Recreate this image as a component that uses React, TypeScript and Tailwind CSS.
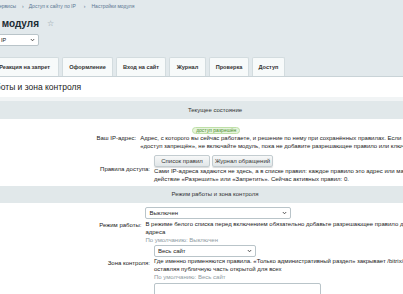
export default function App() {
  const tabs = [
    { name: "Оформление", w: "w-[51px]" },
    { name: "Вход на сайт", w: "w-[50px]" },
    { name: "Журнал", w: "w-[37px]" },
    { name: "Проверка", w: "w-[40px]" },
    { name: "Доступ", w: "w-[33px]" },
  ];

  return (
    <div className="w-[403px] h-[294px] overflow-hidden bg-[#e2e9ec] font-['Liberation_Sans',Arial,sans-serif] text-[#222]">
      {/* Breadcrumbs */}
      <div className="h-[13px] flex items-center text-[5px] text-[#5a7791] whitespace-nowrap">
        <div className="w-[16px] flex justify-end">
          <span>Рабочий стол › Сервисы</span>
        </div>
        <span className="ml-[6px]">›</span>
        <span className="ml-[5px]">Доступ к сайту по IP</span>
        <span className="ml-[8px]">›</span>
        <span className="ml-[6px]">Настройки модуля</span>
      </div>

      {/* Title */}
      <div className="mt-[3px] h-[15px] flex items-center whitespace-nowrap">
        <div className="w-[39px] flex justify-end">
          <span className="text-[10px] font-bold text-[#1b2a33]">Настройки модуля</span>
        </div>
        <span className="ml-[8px] text-[8px] text-[#8796a0] leading-none">☆</span>
      </div>

      {/* Site select */}
      <div className="mt-[3px] w-[41px] h-[12px] bg-white border border-[#b9c4c9] rounded-[2px] flex items-center -ml-[2px] pl-[2px] pr-[3px]">
        <span className="text-[5.5px] text-[#222]">IP</span>
        <svg className="ml-auto" width="5" height="4" viewBox="0 0 5 4">
          <path d="M0.8 1 L2.5 2.8 L4.2 1" fill="none" stroke="#333" strokeWidth="0.8" />
        </svg>
      </div>

      {/* Tabs */}
      <div className="mt-[11px] flex items-end gap-[3px] h-[20px] border-b border-[#c9d3d7]">
        <div className="w-[59px] h-[19px] flex justify-end items-center pr-[8px] bg-[#f7fafa] border border-b-0 border-[#d3dcdf] border-l-0 rounded-tr-[2px] whitespace-nowrap">
          <span className="text-[5.6px] font-semibold text-[#333]">Реакция на запрет</span>
        </div>
        {tabs.map((t) => (
          <div
            key={t.name}
            className={`${t.w} h-[19px] flex justify-center items-center bg-[#f7fafa] border border-b-0 border-[#d3dcdf] rounded-t-[2px] whitespace-nowrap`}
          >
            <span className="text-[5.6px] font-semibold text-[#333]">{t.name}</span>
          </div>
        ))}
      </div>

      {/* Content */}
      <div className="w-[430px] bg-white">
        <div className="h-[20px] flex items-center whitespace-nowrap">
          <div className="w-[81px] flex justify-end">
            <span className="text-[8.5px] text-[#222]">Режим работы и зона контроля</span>
          </div>
        </div>
        <div className="h-[4px] bg-[#f1f4f5]" />

        {/* Section: current state */}
        <div className="h-[18px] bg-[#e1e8ea] flex items-center justify-center text-[6px] text-[#333]">
          Текущее состояние
        </div>

        <div className="flex items-center pt-[7px] pb-[3px] whitespace-nowrap">
          <div className="w-[150px] text-right text-[6px]">Ваш IP-адрес:</div>
          <div className="ml-[4px] text-[6px] leading-[8px]">
            <div className="h-[8px] flex items-center">
              <span className="ml-[52px] px-[3px] h-[7px] flex items-center rounded-full bg-[#e6f4dc] border border-[#bfe0a8] text-[5px] text-[#4c8f2c]">
                доступ разрешён
              </span>
            </div>
            <div>Адрес, с которого вы сейчас работаете, и решение по нему при сохранённых правилах. Если статус</div>
            <div>«доступ запрещён», не включайте модуль, пока не добавите разрешающее правило или ключ доступа.</div>
          </div>
        </div>

        <div className="flex items-center pt-[2px] pb-[3px] whitespace-nowrap">
          <div className="w-[150px] text-right text-[6px]">Правила доступа:</div>
          <div className="ml-[4px] text-[6px] leading-[8px]">
            <div className="flex gap-[2px]">
              <button className="w-[56px] h-[12px] rounded-[2px] border border-[#c3ccd0] bg-gradient-to-b from-[#f7f8f8] to-[#e1e6e8] shadow-[0_1px_1px_rgba(0,0,0,0.15)] text-[6px] text-[#333] flex items-center justify-center">
                Список правил
              </button>
              <button className="w-[61px] h-[12px] rounded-[2px] border border-[#c3ccd0] bg-gradient-to-b from-[#f7f8f8] to-[#e1e6e8] shadow-[0_1px_1px_rgba(0,0,0,0.15)] text-[6px] text-[#333] flex items-center justify-center">
                Журнал обращений
              </button>
            </div>
            <div>Сами IP-адреса задаются не здесь, а в списке правил: каждое правило это адрес или маска и</div>
            <div>действие «Разрешить» или «Запретить». Сейчас активных правил: 0.</div>
          </div>
        </div>

        {/* Section: mode */}
        <div className="h-[17px] bg-[#e1e8ea] flex items-center justify-center text-[6px] text-[#333]">
          Режим работы и зона контроля
        </div>

        <div className="flex items-center pt-[4px] whitespace-nowrap">
          <div className="w-[150px] text-right text-[6px]">Режим работы:</div>
          <div className="ml-[4px] text-[6px] leading-[8px]">
            <div className="w-[146px] h-[12px] mb-[1px] bg-white border border-[#b9c4c9] rounded-[2px] flex items-center pl-[3px] pr-[3px]">
              <span>Выключен</span>
              <svg className="ml-auto" width="5" height="4" viewBox="0 0 5 4">
                <path d="M0.8 1 L2.5 2.8 L4.2 1" fill="none" stroke="#333" strokeWidth="0.8" />
              </svg>
            </div>
            <div>В режиме белого списка перед включением обязательно добавьте разрешающее правило для своего</div>
            <div>адреса</div>
            <div className="text-[#8e9aa2]">По умолчанию: Выключен</div>
          </div>
        </div>

        <div className="flex items-center pt-[1px] whitespace-nowrap">
          <div className="w-[150px] text-right text-[6px]">Зона контроля:</div>
          <div className="ml-[4px] text-[6px] leading-[8px]">
            <div className="w-[102px] h-[12px] bg-white border border-[#b9c4c9] rounded-[2px] flex items-center pl-[3px] pr-[3px]">
              <span>Весь сайт</span>
              <svg className="ml-auto" width="5" height="4" viewBox="0 0 5 4">
                <path d="M0.8 1 L2.5 2.8 L4.2 1" fill="none" stroke="#333" strokeWidth="0.8" />
              </svg>
            </div>
            <div>Где именно применяются правила. «Только административный раздел» закрывает /bitrix/admin/,</div>
            <div>оставляя публичную часть открытой для всех</div>
            <div className="text-[#8e9aa2]">По умолчанию: Весь сайт</div>
          </div>
        </div>

        <div className="flex pt-[2px] pb-[10px]">
          <div className="w-[150px]" />
          <div className="ml-[4px] w-[167px] h-[22px] bg-white border border-[#b9c4c9] rounded-[2px]" />
        </div>
      </div>
    </div>
  );
}
